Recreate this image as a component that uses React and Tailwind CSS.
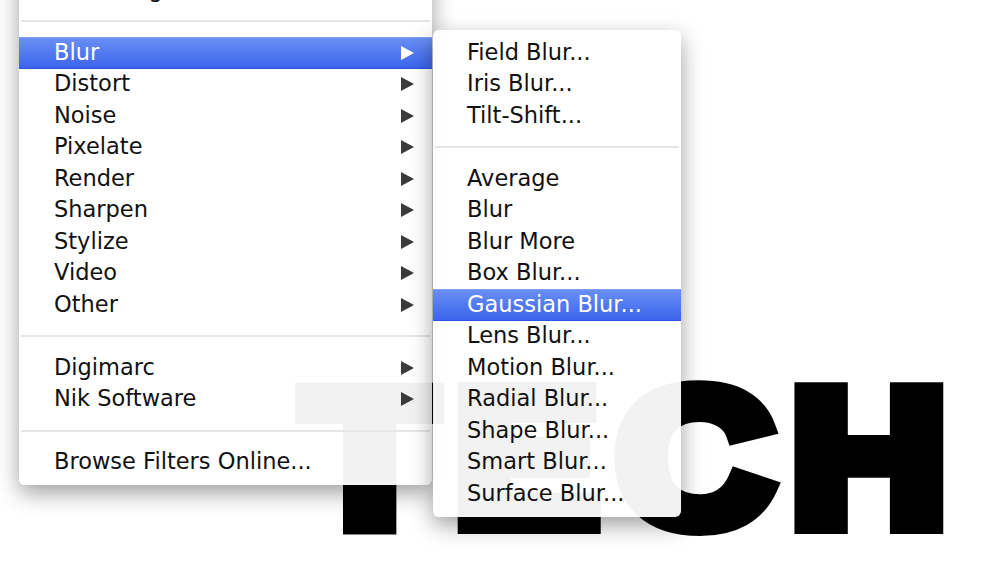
import React from 'react';

const Arrow = ({ active }) => (
  <svg width="13" height="14" viewBox="0 0 13 14" className="shrink-0">
    <path d="M0 0 L13 7 L0 14 Z" fill={active ? '#ffffff' : '#3b3b3b'} />
  </svg>
);

const Separator = () => (
  <div className="flex h-[31.5px] items-center px-[2px]">
    <div className="h-[2px] w-full bg-[#e6e6e6]" />
  </div>
);

const Row = ({ label, arrow, active, sub }) => (
  <div
    className={
      active
        ? 'flex h-[31.5px] items-center justify-between border-t border-b border-t-[#82a1f6] border-b-[#2853e3] bg-gradient-to-b from-[#6a8ef4] to-[#3b64eb] text-white'
        : 'flex h-[31.5px] items-center justify-between text-[#111111]'
    }
  >
    <span className={sub ? 'pl-[34px] whitespace-nowrap' : 'pl-[35px] whitespace-nowrap'}>{label}</span>
    {arrow && (
      <span className="pr-[18px]">
        <Arrow active={active} />
      </span>
    )}
  </div>
);

// main Filter menu, top is cut off by the window
const mainItems = [
  { label: 'Vanishing Point...' },
  { sep: true },
  { label: 'Blur', arrow: true, active: true },
  { label: 'Distort', arrow: true },
  { label: 'Noise', arrow: true },
  { label: 'Pixelate', arrow: true },
  { label: 'Render', arrow: true },
  { label: 'Sharpen', arrow: true },
  { label: 'Stylize', arrow: true },
  { label: 'Video', arrow: true },
  { label: 'Other', arrow: true },
  { sep: true },
  { label: 'Digimarc', arrow: true },
  { label: 'Nik Software', arrow: true },
  { sep: true },
  { label: 'Browse Filters Online...' },
];

const blurItems = [
  { label: 'Field Blur...' },
  { label: 'Iris Blur...' },
  { label: 'Tilt-Shift...' },
  { sep: true },
  { label: 'Average' },
  { label: 'Blur' },
  { label: 'Blur More' },
  { label: 'Box Blur...' },
  { label: 'Gaussian Blur...', active: true },
  { label: 'Lens Blur...' },
  { label: 'Motion Blur...' },
  { label: 'Radial Blur...' },
  { label: 'Shape Blur...' },
  { label: 'Smart Blur...' },
  { label: 'Surface Blur...' },
];

const App = () => {
  return (
    <div className="relative h-[573px] w-full overflow-hidden bg-white font-['DejaVu_Sans',sans-serif] text-[22.5px]">
      {/* canvas text behind the menus */}
      <div className="pl-[304px] pt-[362px]">
        <span className="inline-block origin-left scale-x-[1.12] whitespace-nowrap font-['Liberation_Sans',Arial,sans-serif] text-[192px] font-bold leading-none tracking-[17px] text-black [-webkit-text-stroke:20px_#000]">
          TECH
        </span>
      </div>

      <div className="absolute left-[19px] top-[-33px] w-[413px] rounded-b-[6px] bg-white/95 py-[7px] shadow-[0_8px_22px_rgba(0,0,0,0.38)]">
        {mainItems.map((item, i) =>
          item.sep ? <Separator key={i} /> : <Row key={i} {...item} />
        )}
      </div>

      <div className="absolute left-[433px] top-[30px] w-[248px] rounded-[6px] bg-white/95 py-[7px] shadow-[0_8px_22px_rgba(0,0,0,0.38)]">
        {blurItems.map((item, i) =>
          item.sep ? <Separator key={i} /> : <Row key={i} sub {...item} />
        )}
      </div>
    </div>
  );
};

export default App;
